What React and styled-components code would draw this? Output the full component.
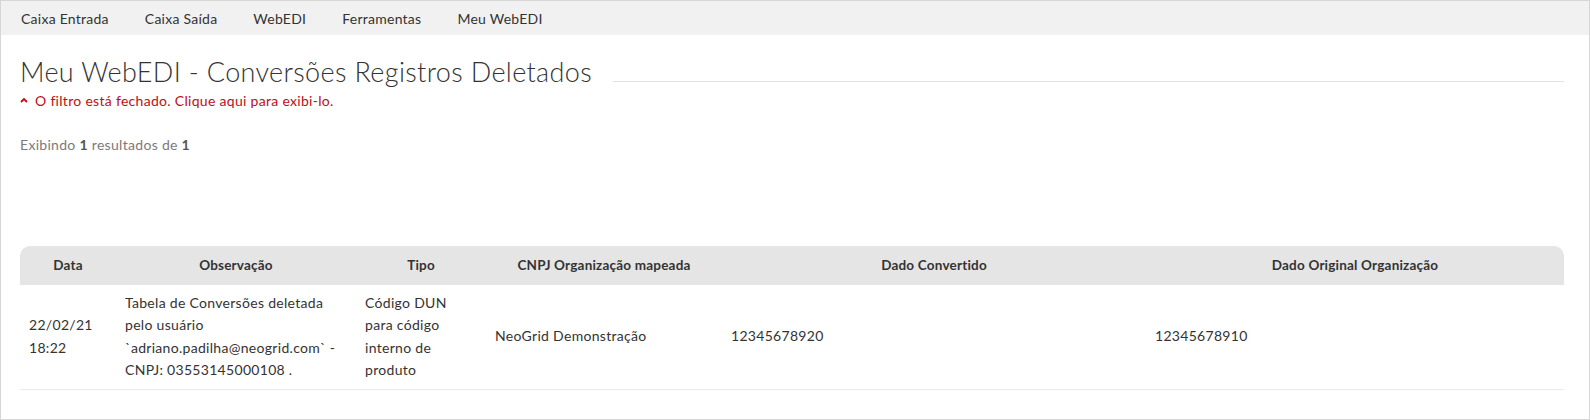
import React from "react";
import styled, { createGlobalStyle } from "styled-components";

const GlobalStyle = createGlobalStyle`
  html, body {
    margin: 0;
    padding: 0;
    background: #fff;
  }
  body {
    font-family: "Lato", "Open Sans", "Liberation Sans", sans-serif;
    color: #333;
  }
`;

const Frame = styled.div`
  width: 1590px;
  height: 420px;
  box-sizing: border-box;
  border: 1px solid #d6d6d6;
  overflow: hidden;
`;

const NavBar = styled.nav`
  display: flex;
  align-items: center;
  height: 34px;
  padding-left: 20px;
  gap: 36px;
  background: #f1f1f1;
`;

const NavItem = styled.a`
  font-size: 14px;
  letter-spacing: 0.25px;
  color: #333;
  text-decoration: none;
  cursor: pointer;
`;

const Content = styled.main`
  padding: 0 25px 0 19px;
`;

const TitleRow = styled.div`
  display: flex;
  align-items: center;
  margin-top: 22px;
`;

const Title = styled.h1`
  margin: 0;
  font-size: 27px;
  font-weight: 300;
  letter-spacing: 0.35px;
  line-height: 30px;
  color: #333;
  white-space: nowrap;
`;

const TitleRule = styled.div`
  flex: 1;
  height: 1px;
  margin: 19px 0 0 21px;
  background: #e3e3e3;
`;

const FilterToggle = styled.a`
  display: inline-flex;
  align-items: center;
  gap: 7px;
  font-size: 14px;
  letter-spacing: 0.3px;
  color: #c10d14;
  cursor: pointer;
`;

const Summary = styled.p`
  margin: 27px 0 0;
  font-size: 14px;
  letter-spacing: 0.3px;
  color: #7a7a7a;

  b {
    color: #555;
  }
`;

const Table = styled.table`
  width: 100%;
  margin-top: 93px;
  border-collapse: separate;
  border-spacing: 0;
  table-layout: fixed;
  font-size: 14px;
  letter-spacing: 0.3px;
`;

const HeadCell = styled.th`
  height: 39px;
  padding: 0 9px;
  background: #e5e5e5;
  font-size: 13.5px;
  font-weight: 700;
  letter-spacing: 0.2px;
  color: #333;
  text-align: center;

  &:first-child {
    border-top-left-radius: 10px;
  }
  &:last-child {
    border-top-right-radius: 10px;
  }
`;

const Cell = styled.td`
  padding: 7px 4px 7px 9px;
  height: 90px;
  line-height: 22.3px;
  color: #333;
  vertical-align: middle;
  border-bottom: 1px solid #ebebeb;
`;

const CellText = styled.div`
  max-width: ${(p) => p.$max || "none"};
`;

const ChevronUp = () => (
  <svg width="8" height="6" viewBox="0 0 8 6">
    <polyline
      points="1,5 4,2 7,5"
      fill="none"
      stroke="#c10d14"
      strokeWidth="1.8"
    />
  </svg>
);

const columns = [
  { label: "Data", width: 96 },
  { label: "Observação", width: 240 },
  { label: "Tipo", width: 130 },
  { label: "CNPJ Organização mapeada", width: 236 },
  { label: "Dado Convertido", width: 424 },
  { label: "Dado Original Organização", width: 418 },
];

const rows = [
  {
    data: ["22/02/21", "18:22"],
    obs: "Tabela de Conversões deletada pelo usuário `adriano.padilha@neogrid.com` - CNPJ: 03553145000108 .",
    tipo: "Código DUN para código interno de produto",
    cnpj: "NeoGrid Demonstração",
    convertido: "12345678920",
    original: "12345678910",
  },
];

export default function App() {
  return (
    <>
      <GlobalStyle />
      <Frame>
        <NavBar>
          <NavItem>Caixa Entrada</NavItem>
          <NavItem>Caixa Saída</NavItem>
          <NavItem>WebEDI</NavItem>
          <NavItem>Ferramentas</NavItem>
          <NavItem>Meu WebEDI</NavItem>
        </NavBar>
        <Content>
          <TitleRow>
            <Title>Meu WebEDI - Conversões Registros Deletados</Title>
            <TitleRule />
          </TitleRow>
          <FilterToggle>
            <ChevronUp />
            O filtro está fechado. Clique aqui para exibi-lo.
          </FilterToggle>
          <Summary>
            Exibindo <b>1</b> resultados de <b>1</b>
          </Summary>
          <Table>
            <colgroup>
              {columns.map((c) => (
                <col key={c.label} style={{ width: c.width }} />
              ))}
            </colgroup>
            <thead>
              <tr>
                {columns.map((c) => (
                  <HeadCell key={c.label}>{c.label}</HeadCell>
                ))}
              </tr>
            </thead>
            <tbody>
              {rows.map((r, i) => (
                <tr key={i}>
                  <Cell>
                    {r.data[0]}
                    <br />
                    {r.data[1]}
                  </Cell>
                  <Cell>
                    <CellText $max="226px">{r.obs}</CellText>
                  </Cell>
                  <Cell>
                    <CellText $max="88px">{r.tipo}</CellText>
                  </Cell>
                  <Cell>{r.cnpj}</Cell>
                  <Cell>{r.convertido}</Cell>
                  <Cell>{r.original}</Cell>
                </tr>
              ))}
            </tbody>
          </Table>
        </Content>
      </Frame>
    </>
  );
}
